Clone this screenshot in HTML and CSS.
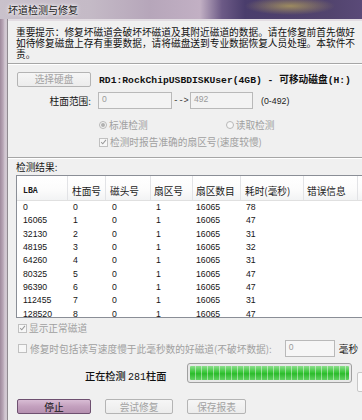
FILE: index.html
```html
<!DOCTYPE html>
<html lang="zh-CN">
<head>
<meta charset="utf-8">
<title>坏道检测与修复</title>
<link rel="stylesheet" href="styles.css">
</head>
<body>
<div class="window">
  <div class="titlebar"><span class="title">坏道检测与修复</span></div>
  <div class="frame">
    <div class="frame-left"></div>
    <div class="client">
      <div class="notice">
        <div>重要提示：修复坏磁道会破坏坏磁道及其附近磁道的数据。请在修复前首先做好</div>
        <div>如待修复磁盘上存有重要数据，请将磁盘送到专业数据恢复人员处理。本软件不</div>
        <div>责。</div>
      </div>
      <div class="sep"></div>
      <div class="row disk-row">
        <div class="btn disabled w-select">选择硬盘</div>
        <div class="disk-name">RD1:RockChipUSBDISKUser(4GB) - 可移动磁盘(H:)</div>
      </div>
      <div class="row range-row">
        <div class="range-label">柱面范围:</div>
        <div class="input in-from">0</div>
        <div class="arrow">--&gt;</div>
        <div class="input in-to">492</div>
        <div class="range-hint">(0-492)</div>
      </div>
      <div class="row radio-row">
        <div class="opt opt-std"><span class="radio checked"></span><span class="dis">标准检测</span></div>
        <div class="opt opt-read"><span class="radio"></span><span class="dis">读取检测</span></div>
      </div>
      <div class="row check-row">
        <div class="opt opt-std"><span class="check checked"><svg viewBox="0 0 8 8" width="8" height="8"><path d="M1.3 4.2 L3.2 6.1 L6.8 1.6" fill="none" stroke="#9a9a9a" stroke-width="1.2"/></svg></span><span class="dis">检测时报告准确的扇区号(速度较慢)</span></div>
      </div>
      <div class="sep sep2"></div>
      <div class="results-label">检测结果:</div>
      <div class="table">
        <div class="thead">
          <div class="th c1 lba">LBA</div>
          <div class="th c2">柱面号</div>
          <div class="th c3">磁头号</div>
          <div class="th c4">扇区号</div>
          <div class="th c5">扇区数目</div>
          <div class="th c6">耗时(毫秒)</div>
          <div class="th c7">错误信息</div>
          <div class="th c8"></div>
        </div>
        <div class="tbody">
          <div class="tr"><div class="td c1">0</div><div class="td c2">0</div><div class="td c3">0</div><div class="td c4">1</div><div class="td c5">16065</div><div class="td c6">78</div></div>
          <div class="tr"><div class="td c1">16065</div><div class="td c2">1</div><div class="td c3">0</div><div class="td c4">1</div><div class="td c5">16065</div><div class="td c6">47</div></div>
          <div class="tr"><div class="td c1">32130</div><div class="td c2">2</div><div class="td c3">0</div><div class="td c4">1</div><div class="td c5">16065</div><div class="td c6">31</div></div>
          <div class="tr"><div class="td c1">48195</div><div class="td c2">3</div><div class="td c3">0</div><div class="td c4">1</div><div class="td c5">16065</div><div class="td c6">32</div></div>
          <div class="tr"><div class="td c1">64260</div><div class="td c2">4</div><div class="td c3">0</div><div class="td c4">1</div><div class="td c5">16065</div><div class="td c6">31</div></div>
          <div class="tr"><div class="td c1">80325</div><div class="td c2">5</div><div class="td c3">0</div><div class="td c4">1</div><div class="td c5">16065</div><div class="td c6">47</div></div>
          <div class="tr"><div class="td c1">96390</div><div class="td c2">6</div><div class="td c3">0</div><div class="td c4">1</div><div class="td c5">16065</div><div class="td c6">47</div></div>
          <div class="tr"><div class="td c1">112455</div><div class="td c2">7</div><div class="td c3">0</div><div class="td c4">1</div><div class="td c5">16065</div><div class="td c6">31</div></div>
          <div class="tr"><div class="td c1">128520</div><div class="td c2">8</div><div class="td c3">0</div><div class="td c4">1</div><div class="td c5">16065</div><div class="td c6">47</div></div>
        </div>
      </div>
      <div class="row show-row">
        <span class="check checked"><svg viewBox="0 0 8 8" width="8" height="8"><path d="M1.3 4.2 L3.2 6.1 L6.8 1.6" fill="none" stroke="#9a9a9a" stroke-width="1.2"/></svg></span><span class="dis">显示正常磁道</span>
      </div>
      <div class="row slow-row">
        <span class="check"></span><span class="dis slow-text">修复时包括读写速度慢于此毫秒数的好磁道(不破坏数据):</span>
        <div class="input in-ms">0</div>
        <span class="ms">毫秒</span>
      </div>
      <div class="row progress-row">
        <div class="status">正在检测 <span class="num">281</span>柱面</div>
        <div class="progress"><div class="fill"></div></div>
        <div class="side-btn"></div>
      </div>
      <div class="row button-row">
        <div class="btn stop">停止</div>
        <div class="btn disabled w-repair">尝试修复</div>
        <div class="btn disabled w-save">保存报表</div>
      </div>
    </div>
  </div>
</div>
</body>
</html>
```
FILE: styles.css
```css
* { box-sizing: border-box; margin: 0; padding: 0; }
html, body { width: 362px; height: 420px; overflow: hidden; }
body {
  font-family: "Noto Sans CJK SC", "Liberation Sans", sans-serif;
  font-size: 9.7px;
  color: #151515;
  background: #f0f0f0;
}
.window { width: 362px; height: 420px; display: flex; flex-direction: column; overflow: hidden; }

.titlebar {
  height: 19px;
  flex: none;
  display: flex;
  align-items: center;
  padding-left: 8px;
  background:
    radial-gradient(ellipse 45px 9px at 290px 6px, rgba(190,170,90,0.7), rgba(190,170,90,0) 100%),
    linear-gradient(90deg, #c9c1cb 0, #c4bac6 90px, #b6a6ba 150px, #c2b0c4 200px, #6c5a86 222px, #4a3d6c 245px, #52446e 330px, #5a4a78 362px);
}
.title {
  font-size: 10px;
  line-height: 12px;
  color: #202020;
  text-shadow: 0 0 3px #fff, 0 0 5px #fff;
}

.frame { flex: 1; display: flex; min-height: 0; }
.frame-left {
  width: 8px;
  flex: none;
  background: linear-gradient(90deg, #9e8a9c 0, #b8a6b6 3px, #d2c8d2 5px, #cfc6cf 7px, #8f8a90 7px);
}
.client {
  flex: 1;
  min-width: 0;
  background: #f0f0f0;
  overflow: hidden;
  padding-left: 8px;
  border-top: 2px solid #e2dce2;
}

.notice { margin-top: 6px; line-height: 11px; white-space: nowrap; color: #111; }

.sep { height: 2px; margin-top: 3px; margin-left: -8px; border-top: 1px solid #a6a6a6; border-bottom: 1px solid #fff; }
.sep2 { margin-top: 7px; }

.row { display: flex; align-items: center; white-space: nowrap; }
.row > * { flex: none; }

.btn {
  height: 15px;
  display: flex;
  align-items: center;
  justify-content: center;
  border: 1px solid #b4b4b4;
  border-radius: 2px;
  background: linear-gradient(#f6f6f6, #ececec);
  flex: none;
}
.btn.disabled { color: #a2a2a2; }
.w-select { width: 74px; margin-left: 1px; }

.disk-row { margin-top: 6px; height: 16px; }
.disk-name {
  margin-left: 8px;
  font-family: "Liberation Mono", "Noto Sans CJK SC", monospace;
  font-weight: bold;
  font-size: 9.7px;
  color: #111;
}

.range-row { margin-top: 5px; height: 17px; }
.range-label { width: 75px; text-align: right; margin-right: 7px; }
.input {
  height: 17px;
  border: 1px solid #b9b9b9;
  background: #f3f3f3;
  color: #9a9a9a;
  font-family: "Liberation Sans", sans-serif;
  font-size: 8.6px;
  padding-left: 3px;
  padding-top: 1px;
  flex: none;
}
.in-from { width: 74px; }
.arrow { width: 18px; text-align: center; font-family: "Liberation Mono", monospace; font-size: 8.6px; color: #333; }
.in-to { width: 63px; }
.range-hint { margin-left: 8px; font-family: "Liberation Sans", sans-serif; font-size: 8.8px; color: #222; }

.radio-row { margin-top: 8px; height: 16px; }
.check-row { margin-top: 1px; height: 16px; }
.opt { display: flex; align-items: center; }
.opt-std { margin-left: 83px; }
.opt-read { margin-left: 78px; }
.dis { color: #a0a0a0; }
.radio {
  width: 8px; height: 8px;
  border: 1px solid #b8b8b8;
  border-radius: 50%;
  background: #f6f6f6;
  margin-right: 2px;
  display: flex; align-items: center; justify-content: center;
}
.radio.checked::after { content: ""; width: 4px; height: 4px; border-radius: 50%; background: #b0b0b0; }
.check {
  width: 9px; height: 9px;
  border: 1px solid #c0c0c0;
  background: #f7f7f7;
  margin-right: 2px;
  display: flex; align-items: center; justify-content: center;
  flex: none;
}

.results-label { margin-top: 2px; height: 14px; line-height: 12px; }

.table {
  width: 360px;
  height: 143px;
  border: 1px solid #8a8e96;
  background: #fff;
  overflow: hidden;
}
.thead {
  display: grid;
  grid-template-columns: 51px 38px 45px 42px 48px 63px 54px 40px;
  height: 25px;
  background: linear-gradient(#ffffff, #fbfbfb 60%, #f2f3f4);
  border-bottom: 1px solid #e0e0e0;
}
.th {
  border-right: 1px solid #e2e3e6;
  padding-left: 4px;
  padding-top: 9px;
  line-height: 12px;
  color: #1a1a1a;
}
.th.lba { padding-left: 6px; font-family: "Liberation Mono", monospace; font-weight: bold; font-size: 8.2px; }
.th.c4, .th.c5, .th.c7 { padding-left: 3px; }
.tr {
  display: grid;
  grid-template-columns: 51px 38px 45px 42px 48px 63px 54px 40px;
  height: 13.33px;
  line-height: 13px;
  font-family: "Liberation Sans", sans-serif;
  font-size: 8.7px;
  color: #151515;
}
.td { padding-left: 5px; }
.td.c1 { padding-left: 6px; }
.td.c3 { padding-left: 6px; }
.td.c5 { padding-left: 3px; }

.show-row { margin-top: 4px; height: 12px; padding-left: 2px; }
.slow-row { margin-top: 6px; height: 17px; padding-left: 2px; }
.slow-text { margin-left: 1px; }
.in-ms { width: 50px; margin-left: 13px; background: #f6f6f6; }
.ms { margin-left: 4px; color: #222; }

.progress-row { margin-top: 6px; height: 20px; align-items: stretch; }
.status {
  margin-left: 69px;
  width: 102px;
  padding-top: 7px;
  line-height: 12px;
  font-size: 10.2px;
  color: #111;
  font-weight: 500;
}
.num { font-family: "Liberation Mono", monospace; font-size: 10px; }
.progress {
  width: 165px;
  height: 20px;
  border: 1px solid #a0a0a0;
  border-radius: 3px;
  background: #e8e8e8;
  padding: 2px;
}
.fill {
  width: 100%;
  height: 100%;
  border-radius: 1px;
  background:
    linear-gradient(rgba(255,255,255,0.45), rgba(255,255,255,0.05) 45%, rgba(0,80,0,0.08) 55%, rgba(255,255,255,0.25)),
    repeating-linear-gradient(90deg, #2fc42f 0, #2fc42f 5px, #8fdc8f 5px, #8fdc8f 6px);
}
.side-btn {
  margin-left: 5px;
  margin-top: 9px;
  width: 12px;
  height: 20px;
  border: 1px solid #c8c8c8;
  border-radius: 2px;
  background: #fafafa;
}

.button-row { margin-top: 16px; height: 15px; }
.stop {
  width: 74px;
  margin-left: 1px;
  background: linear-gradient(#d8bcd4, #c3a0be 50%, #b590b0);
  border-color: #6e5070;
  color: #111;
}
.w-repair { width: 68px; margin-left: 14px; }
.w-save { width: 59px; margin-left: 14px; }
```
